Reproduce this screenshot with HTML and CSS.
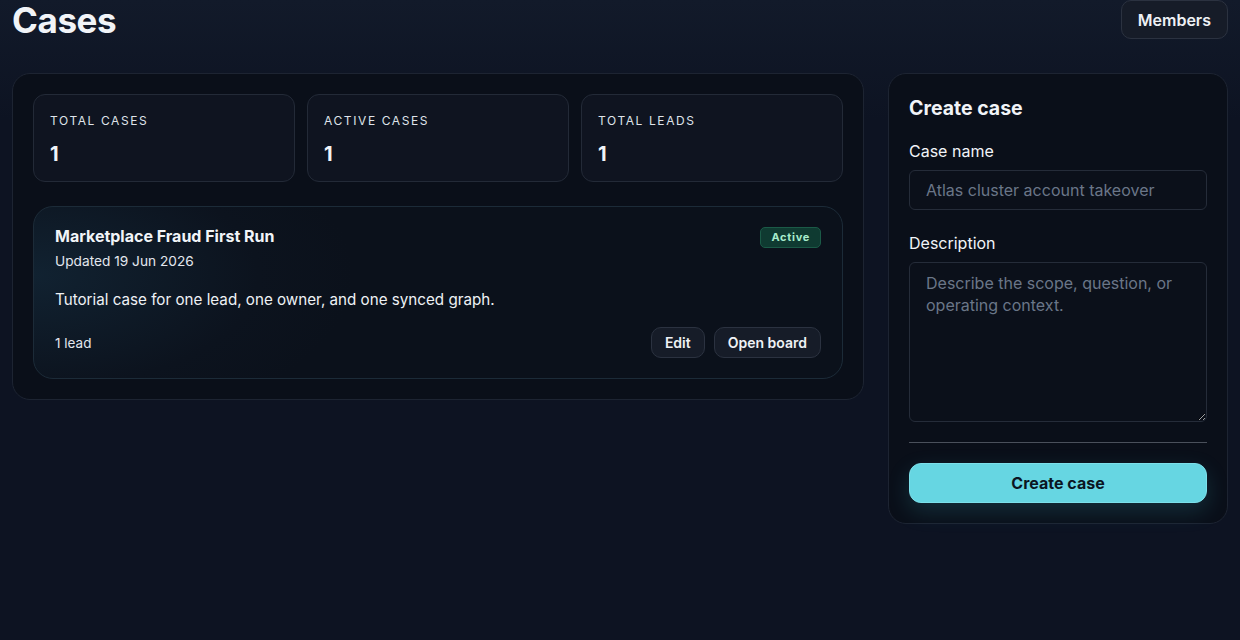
FILE: index.html
```html
<!DOCTYPE html>
<html lang="en">

<head>
    <meta charset="UTF-8">
    <meta name="viewport" content="width=device-width, initial-scale=1.0">
    <title>Cases</title>
    <link rel="stylesheet" href="styles.css">
</head>

<body>
    <header class="page-header">
        <h1>Cases</h1>
        <button class="btn btn-ghost members-btn">Members</button>
    </header>

    <main class="layout">
        <section class="panel cases-panel">
            <div class="stats">
                <div class="stat">
                    <span class="stat-label">Total cases</span>
                    <span class="stat-value">1</span>
                </div>
                <div class="stat">
                    <span class="stat-label">Active cases</span>
                    <span class="stat-value">1</span>
                </div>
                <div class="stat">
                    <span class="stat-label">Total leads</span>
                    <span class="stat-value">1</span>
                </div>
            </div>

            <article class="case-card">
                <div class="case-top">
                    <div>
                        <h2 class="case-title">Marketplace Fraud First Run</h2>
                        <p class="case-date">Updated 19 Jun 2026</p>
                    </div>
                    <span class="badge">Active</span>
                </div>
                <p class="case-desc">Tutorial case for one lead, one owner, and one synced graph.</p>
                <div class="case-foot">
                    <span class="case-count">1 lead</span>
                    <div class="case-actions">
                        <button class="btn btn-small">Edit</button>
                        <button class="btn btn-small">Open board</button>
                    </div>
                </div>
            </article>
        </section>

        <aside class="panel create-panel">
            <h2 class="create-title">Create case</h2>
            <form class="create-form">
                <label for="caseName">Case name</label>
                <input type="text" id="caseName" placeholder="Atlas cluster account takeover">

                <label for="caseDesc">Description</label>
                <textarea id="caseDesc" placeholder="Describe the scope, question, or operating context."></textarea>

                <hr class="divider">
                <button type="submit" class="btn-primary">Create case</button>
            </form>
        </aside>
    </main>
</body>

</html>
```

FILE: styles.css
```css
* {
    box-sizing: border-box;
}

body {
    margin: 0;
    padding: 0 12px;
    min-height: 640px;
    font-family: Inter, "Noto Sans", sans-serif;
    color: #f1f4f8;
    background: linear-gradient(180deg, #121a2a 0px, #0d1322 120px, #0d1322 100%);
}

.page-header {
    display: flex;
    justify-content: space-between;
    align-items: flex-start;
}

h1 {
    margin: 0;
    font-size: 35px;
    line-height: 40px;
    font-weight: 700;
    letter-spacing: -0.4px;
}

.btn {
    font-family: inherit;
    color: #eef1f5;
    background-color: #161c28;
    border: 1px solid #2b3240;
    cursor: pointer;
}

.members-btn {
    height: 39px;
    padding: 0 16px;
    border-radius: 10px;
    font-size: 16px;
    font-weight: 600;
}

.layout {
    display: grid;
    grid-template-columns: 852px 340px;
    gap: 24px;
    align-items: start;
    margin-top: 33px;
}

.panel {
    background-color: #0a0f19;
    border: 1px solid #1d2432;
    border-radius: 18px;
}

.cases-panel {
    padding: 20px;
}

.stats {
    display: grid;
    grid-template-columns: repeat(3, 1fr);
    gap: 12px;
}

.stat {
    display: flex;
    flex-direction: column;
    height: 88px;
    padding: 18px 16px 0;
    background-color: #0f1420;
    border: 1px solid #232a37;
    border-radius: 12px;
}

.stat-label {
    font-size: 12px;
    line-height: 16px;
    letter-spacing: 1.6px;
    text-transform: uppercase;
    color: #dfe3ea;
}

.stat-value {
    margin-top: 13px;
    font-size: 20px;
    line-height: 24px;
    font-weight: 700;
}

.case-card {
    margin-top: 24px;
    padding: 18px 21px 20px;
    border: 1px solid #1c2b38;
    border-radius: 20px;
    background: radial-gradient(ellipse 320px 160px at 0% 40%, #112231 0%, #0c131e 70%, #0b111b 100%);
}

.case-top {
    display: flex;
    justify-content: space-between;
    align-items: flex-start;
}

.case-title {
    margin: 0;
    font-size: 16px;
    line-height: 22px;
    font-weight: 700;
}

.case-date {
    margin: 5px 0 0;
    font-size: 13.7px;
    line-height: 18px;
    color: #e3e7ee;
}

.badge {
    margin-top: 2px;
    padding: 2px 10px;
    font-size: 11px;
    line-height: 15px;
    font-weight: 700;
    letter-spacing: 0.7px;
    color: #a7eccb;
    background-color: #0f3a31;
    border: 1px solid #1b5a47;
    border-radius: 5px;
}

.case-desc {
    margin: 19px 0 0;
    font-size: 15.2px;
    line-height: 22px;
    color: #eef1f5;
}

.case-foot {
    display: flex;
    justify-content: space-between;
    align-items: center;
    margin-top: 16px;
}

.case-count {
    font-size: 13.5px;
    color: #e3e7ee;
}

.case-actions {
    display: flex;
    gap: 9px;
}

.btn-small {
    height: 31px;
    padding: 0 13px;
    font-size: 14px;
    font-weight: 600;
    border-radius: 10px;
}

.create-panel {
    padding: 20px;
}

.create-title {
    margin: 0;
    font-size: 19.5px;
    line-height: 28px;
    font-weight: 700;
}

.create-form {
    display: flex;
    flex-direction: column;
}

.create-form label {
    margin-top: 18px;
    font-size: 16px;
    line-height: 22px;
    color: #f1f4f8;
}

.create-form label + input,
.create-form label + textarea {
    margin-top: 8px;
}

.create-form input + label {
    margin-top: 22px;
}

input,
textarea {
    width: 100%;
    padding: 0 16px;
    font-family: inherit;
    font-size: 16px;
    color: #f1f4f8;
    background-color: #0b101a;
    border: 1px solid #252c39;
    border-radius: 6px;
}

input {
    height: 40px;
}

textarea {
    height: 160px;
    padding: 9px 16px;
    line-height: 22px;
    resize: vertical;
}

::placeholder {
    color: #6a7688;
}

.divider {
    width: 100%;
    margin: 20px 0 0;
    border: none;
    border-top: 1px solid #4a505b;
}

.btn-primary {
    height: 40px;
    margin-top: 20px;
    font-family: inherit;
    font-size: 16px;
    font-weight: 700;
    color: #0b1522;
    background-color: #66d6e2;
    border: 1px solid #7ce0ea;
    border-radius: 12px;
    box-shadow: 0 8px 22px rgba(60, 190, 210, 0.18);
    cursor: pointer;
}
```
